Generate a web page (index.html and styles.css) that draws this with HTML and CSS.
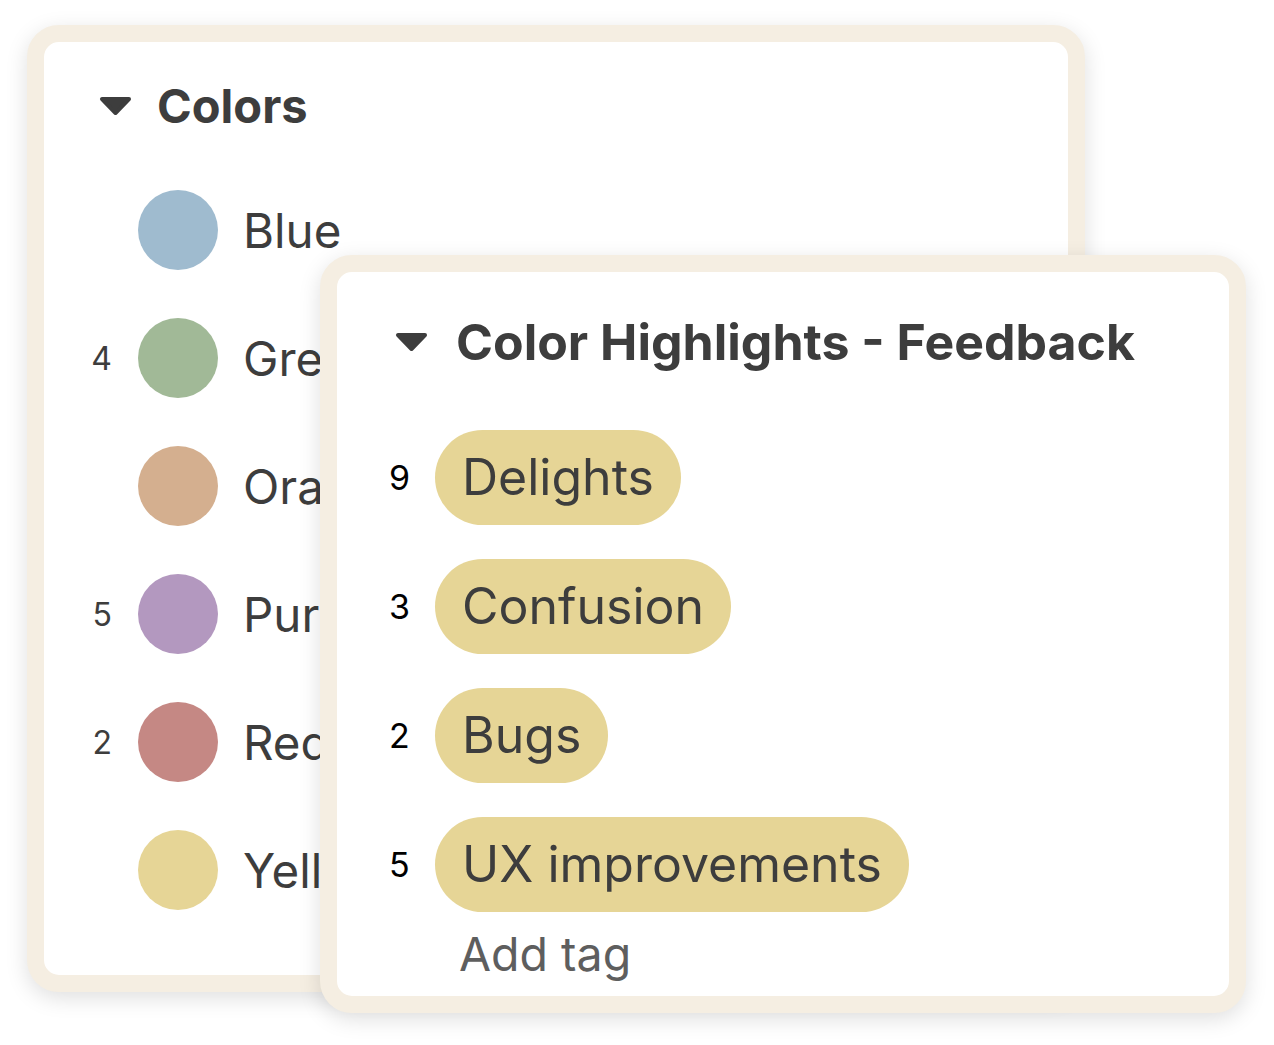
FILE: index.html
```html
<!DOCTYPE html>
<html lang="en">
<head>
<meta charset="UTF-8">
<title>Color tags</title>
<link rel="stylesheet" href="styles.css">
</head>
<body>

<div class="stage">

    <!-- back card: color list -->
    <div class="card card-back">
        <div class="card-head back-head">
            <svg class="caret" width="33" height="20" viewBox="0 0 33 20"><polygon points="3,3 30,3 16.5,17" fill="#3d3d3d" stroke="#3d3d3d" stroke-width="4" stroke-linejoin="round"/></svg>
            <h2>Colors</h2>
        </div>
        <ul class="color-list">
            <li><span class="count"></span><span class="dot blue"></span><span class="name">Blue</span></li>
            <li><span class="count">4</span><span class="dot green"></span><span class="name">Green</span></li>
            <li><span class="count"></span><span class="dot orange"></span><span class="name">Orange</span></li>
            <li><span class="count">5</span><span class="dot purple"></span><span class="name">Purple</span></li>
            <li><span class="count">2</span><span class="dot red"></span><span class="name">Red</span></li>
            <li><span class="count"></span><span class="dot yellow"></span><span class="name">Yellow</span></li>
        </ul>
    </div>

    <!-- front card: highlight tags -->
    <div class="card card-front">
        <div class="card-head front-head">
            <svg class="caret" width="33" height="20" viewBox="0 0 33 20"><polygon points="3,3 30,3 16.5,17" fill="#3d3d3d" stroke="#3d3d3d" stroke-width="4" stroke-linejoin="round"/></svg>
            <h2>Color Highlights - Feedback</h2>
        </div>
        <ul class="tag-list">
            <li><span class="count">9</span><span class="tag">Delights</span></li>
            <li><span class="count">3</span><span class="tag">Confusion</span></li>
            <li><span class="count">2</span><span class="tag">Bugs</span></li>
            <li><span class="count">5</span><span class="tag">UX improvements</span></li>
        </ul>
        <div class="add-tag">Add tag</div>
    </div>

</div>

</body>
</html>
```

FILE: styles.css
```css
body {
    margin: 0;
    background: #fff;
    font-family: Inter, "Noto Sans", sans-serif;
    color: #3d3d3d;
}
.stage {
    position: relative;
    box-sizing: border-box;
    width: 1274px;
    height: 1045px;
    padding: 25px 0 0 27px;
}
.card {
    box-sizing: border-box;
    background: #fff;
    border: 17px solid #f5eee2;
    border-radius: 32px;
    box-shadow: 0 6px 22px rgba(0, 0, 0, 0.13);
}
.card-back {
    width: 1058px;
    height: 967px;
}
.card-front {
    position: absolute;
    left: 320px;
    top: 255px;
    width: 926px;
    height: 758px;
}
.card-head {
    display: flex;
    align-items: center;
}
.card-head h2 {
    margin: 0;
    font-weight: 700;
    line-height: 56px;
}
.caret {
    display: block;
    flex: none;
}
.back-head {
    padding: 36px 0 0 55px;
    gap: 25px;
}
.back-head h2 {
    font-size: 47px;
}
.front-head {
    padding: 42px 0 0 58px;
    gap: 28px;
}
.front-head h2 {
    font-size: 50px;
}
ul {
    list-style: none;
    margin: 0;
    padding: 0;
}
.color-list {
    display: flex;
    flex-direction: column;
    gap: 48px;
    margin-top: 56px;
    padding-left: 44px;
}
.color-list li {
    display: flex;
    align-items: center;
    height: 80px;
}
.color-list .count {
    width: 24px;
    text-align: right;
    font-size: 32px;
    margin-right: 26px;
}
.dot {
    width: 80px;
    height: 80px;
    border-radius: 50%;
    margin-right: 25px;
    flex: none;
}
.dot.blue { background: #9fbbcf; }
.dot.green { background: #a1b997; }
.dot.orange { background: #d4af8f; }
.dot.purple { background: #b398bf; }
.dot.red { background: #c58884; }
.dot.yellow { background: #e6d596; }
.name {
    font-size: 47.5px;
}
.tag-list {
    display: flex;
    flex-direction: column;
    gap: 34px;
    margin-top: 60px;
    padding-left: 52px;
}
.tag-list li {
    display: flex;
    align-items: center;
}
.tag-list .count {
    width: 22px;
    font-size: 34px;
    color: #000;
    margin-right: 24px;
}
.tag {
    background: #e6d596;
    border-radius: 48px;
    height: 95px;
    line-height: 95px;
    padding: 0 27px;
    font-size: 50px;
}
.add-tag {
    font-size: 46.5px;
    color: #5e5e5e;
    margin: 14px 0 0 122px;
}
```
